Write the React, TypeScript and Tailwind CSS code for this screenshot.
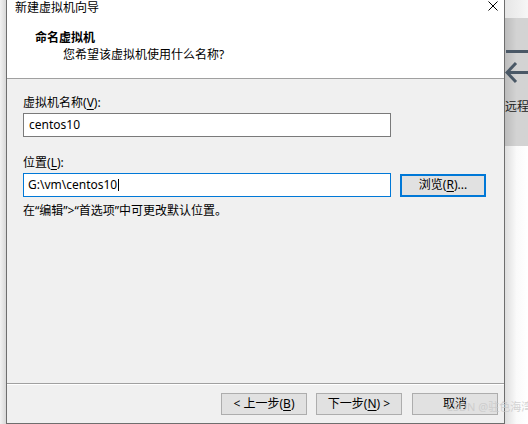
const AccessKey = ({ k }: { k: string }) => (
  <span>
    (<span className="underline underline-offset-[2px]">{k}</span>)
  </span>
);

const WizButton = ({ children, focused }: { children: React.ReactNode; focused?: boolean }) => (
  <div
    className={
      focused
        ? "flex h-[23px] w-[86px] items-center justify-center border-2 border-[#0078d7] bg-[#e1e1e1]"
        : "flex h-[22px] w-[86px] items-center justify-center border border-[#adadad] bg-[#e1e1e1]"
    }
  >
    {children}
  </div>
);

const App = () => {
  return (
    <div className="relative flex h-[424px] w-[528px] overflow-hidden bg-white font-['Noto_Sans','Noto_Sans_CJK_SC',sans-serif] text-[12px] leading-[14px] text-black">
      {/* shadow left of the dialog */}
      <div className="w-[6px] shrink-0 bg-gradient-to-r from-[#f2f2f2] to-[#d8d8d8]" />

      {/* wizard dialog */}
      <div className="flex w-[499px] shrink-0 flex-col border-x border-b border-[#6e6e6e] bg-[#f0f0f0]">
        <div className="h-[79px] border-b border-[#a0a0a0] bg-white">
          <div className="flex items-start justify-between pl-[8px] pr-[6px] pt-[1px]">
            <span>新建虚拟机向导</span>
            <svg width="10" height="10" viewBox="0 0 10 10">
              <path d="M0.5 0.5 L9.5 9.5 M9.5 0.5 L0.5 9.5" stroke="#000" strokeWidth="1" />
            </svg>
          </div>
          <div className="pl-[28px] pt-[16px] font-bold">命名虚拟机</div>
          <div className="pl-[56px] pt-[3px]">您希望该虚拟机使用什么名称?</div>
        </div>

        <div className="flex flex-1 flex-col px-[16px] pt-[17px]">
          <div>
            虚拟机名称<AccessKey k="V" />:
          </div>
          <div className="mt-[3px] flex h-[24px] w-[368px] items-center border border-[#7a7a7a] bg-white pl-[5px]">
            centos10
          </div>

          <div className="mt-[19px]">
            位置<AccessKey k="L" />:
          </div>
          <div className="mt-[3px] flex items-center gap-[9px]">
            <div className="flex h-[24px] w-[368px] items-center border border-[#0078d7] bg-white pl-[4px]">
              G:\vm\centos10
              <span className="ml-[1px] inline-block h-[12px] w-px bg-black" />
            </div>
            <WizButton focused>
              浏览<AccessKey k="R" />...
            </WizButton>
          </div>

          <div className="mt-[7px]">在“编辑”&gt;“首选项”中可更改默认位置。</div>
        </div>

        <div className="h-[40px] border-t border-[#a0a0a0]">
          <div className="flex justify-end gap-[9px] border-t border-white pr-[6px] pt-[8px]">
            <WizButton>
              <span className="whitespace-pre">&lt; 上一步</span>
              <AccessKey k="B" />
            </WizButton>
            <WizButton>
              下一步<AccessKey k="N" />
              <span className="whitespace-pre"> &gt;</span>
            </WizButton>
            <div className="ml-[1px]">
              <WizButton>取消</WizButton>
            </div>
          </div>
        </div>
      </div>

      {/* window behind, to the right */}
      <div className="flex w-[23px] shrink-0 flex-col">
        <div className="h-[18px] bg-gradient-to-r from-[#e6e6e6] to-[#f6f6f6]" />
        <div className="flex h-[128px] flex-col bg-gradient-to-r from-[#bcbcbc] via-[#d3d3d3] to-[#d3d3d3]">
          <svg width="23" height="40" viewBox="0 0 23 40" className="mt-[28px]">
            <path d="M1 5.5 H23" stroke="#4a5866" strokeWidth="3" fill="none" />
            <path d="M11 17 L2 26.5 L11 36 M2 26.5 H23" stroke="#4a5866" strokeWidth="3" fill="none" />
          </svg>
          <div className="mt-[14px] whitespace-nowrap text-[#222]">远程</div>
        </div>
        <div className="flex-1 bg-gradient-to-r from-[#dedede] via-[#fafafa] to-white" />
      </div>

      <div className="absolute left-[446px] top-[400px] whitespace-nowrap text-[11px] text-[#c9c9c9] opacity-80">
        CSDN @驻色海湾
      </div>
    </div>
  );
};

export default App;
